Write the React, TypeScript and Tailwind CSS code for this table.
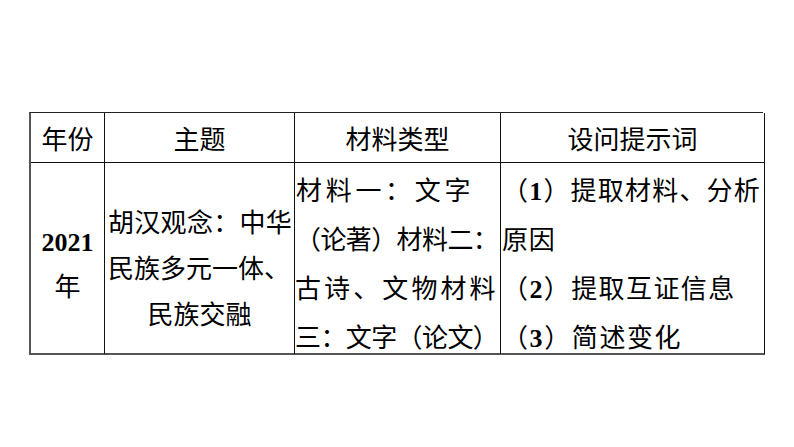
import React from "react";

const F = { fontFamily: '"Liberation Serif", "Noto Sans CJK SC", serif' };

export default function App() {
  return (
    <div className="w-[794px] h-[447px] bg-white overflow-hidden text-black" style={F}>
      <div className="pt-[112px] pl-[29px]">
        <div className="grid grid-cols-[74px_190px_206px_264px] grid-rows-[50px_192px] border-t-[1.5px] border-l-2 border-t-[#222] border-l-[#555] w-[734px]">
          {/* header */}
          <div className="border-r-[1.5px] border-b-[1.5px] border-[#111] flex items-center justify-center pt-[6px] text-[26px] leading-none">年份</div>
          <div className="border-r-[1.5px] border-b-[1.5px] border-[#111] flex items-center justify-center pt-[6px] text-[26px] leading-none">主题</div>
          <div className="border-r-[1.5px] border-b-[1.5px] border-[#111] flex items-center justify-center pt-[6px] text-[26px] leading-none">材料类型</div>
          <div className="border-r-[1.5px] border-b-[1.5px] border-[#111] flex items-center justify-center pt-[6px] text-[26px] leading-none">设问提示词</div>
          {/* body */}
          <div className="border-r-[1.5px] border-b-2 border-r-[#111] border-b-[#555] flex flex-col items-center pt-[57px] text-[26px] leading-[45px]">
            <div className="font-bold">2021</div>
            <div>年</div>
          </div>
          <div className="border-r-[1.5px] border-b-2 border-r-[#111] border-b-[#555] flex flex-col pt-[38px] pl-[3px] text-[26px] leading-[46px]">
            <div className="tracking-[0.3px] whitespace-nowrap">胡汉观念：中华</div>
            <div className="whitespace-nowrap">民族多元一体、</div>
            <div className="text-center pr-[3px]">民族交融</div>
          </div>
          <div className="border-r-[1.5px] border-b-2 border-r-[#111] border-b-[#555] flex flex-col pt-[4px] text-[26px] leading-[49px] whitespace-nowrap overflow-hidden">
            <div className="tracking-[3.7px] pl-[1px]">材料一：文字</div>
            <div className="tracking-[-0.6px]">（论著）材料二：</div>
            <div className="tracking-[3.1px]">古诗、文物材料</div>
            <div className="tracking-[-0.6px]">三：文字（论文）</div>
          </div>
          <div className="border-r-[1.5px] border-b-2 border-r-[#111] border-b-[#555] flex flex-col pt-[4px] pl-[1px] text-[26px] leading-[49px] whitespace-nowrap overflow-hidden">
            <div className="tracking-[1.2px]">（<span className="font-bold">1</span>）提取材料、分析</div>
            <div className="tracking-[0.8px]">原因</div>
            <div className="tracking-[1.4px]">（<span className="font-bold">2</span>）提取互证信息</div>
            <div className="tracking-[1.6px]">（<span className="font-bold">3</span>）简述变化</div>
          </div>
        </div>
      </div>
    </div>
  );
}
